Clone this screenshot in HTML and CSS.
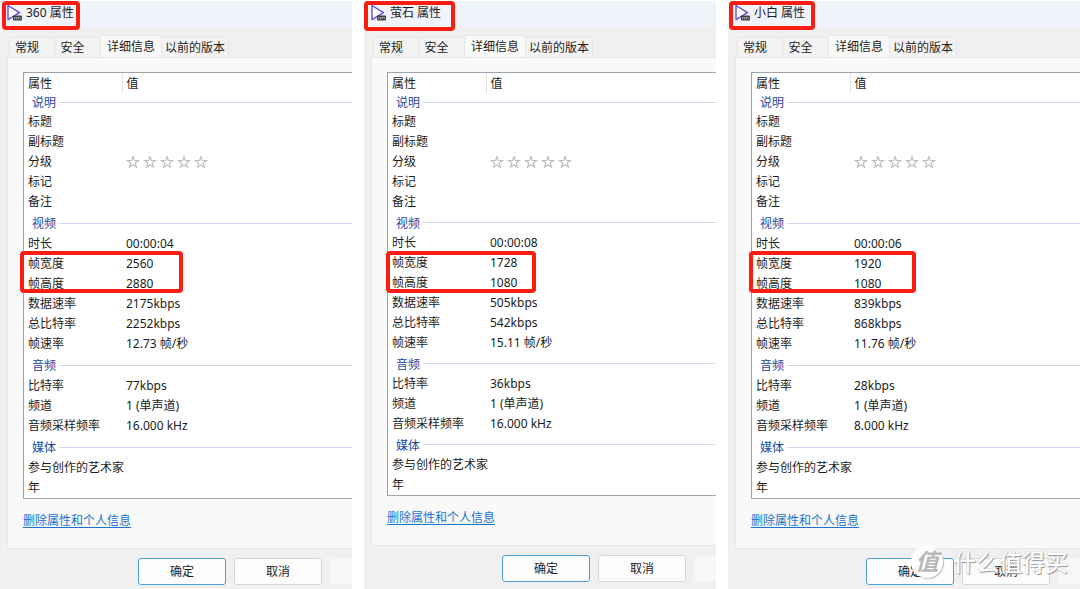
FILE: index.html
```html
<!DOCTYPE html>
<html lang="zh-CN">
<head>
<meta charset="utf-8">
<meta name="viewport" content="width=device-width, initial-scale=1">
<title>属性</title>
<link rel="stylesheet" href="styles.css">
</head>
<body>
<svg class="defs" aria-hidden="true">
  <symbol id="media" viewBox="0 0 18 18">
    <path d="M2 1.5 L13.5 8.6 L2 15.6 Z" fill="#fff" stroke="#6a4fd0" stroke-width="1.4" stroke-linejoin="round"/>
    <rect x="7" y="11.5" width="9" height="5" rx="1" fill="#3a3a3c"/>
    <path d="M8.5 15.5v-2.5l1 1.2 1-1.2v2.5M12 15.5v-2.4h1.2v1.2H12M14.6 13v2.5" fill="none" stroke="#c8c8c8" stroke-width=".6"/>
  </symbol>
  <symbol id="stars" viewBox="0 0 84 14">
    <g fill="#fff" stroke="#bdbdbd" stroke-width="1.1">
      <path id="star" d="M7 1.5 L8.4 5.5 L12.6 5.5 L9.2 8 L10.5 12.2 L7 9.7 L3.5 12.2 L4.8 8 L1.4 5.5 L5.6 5.5 Z"/>
      <use href="#star" x="17"/><use href="#star" x="34"/><use href="#star" x="51"/><use href="#star" x="68"/>
    </g>
  </symbol>
</svg>
<main class="board">
  <section class="dialog dialog-360">
    <header class="title"><svg class="title-icon"><use href="#media"/></svg><h1>360 属性</h1></header>
    <nav class="tabs"><button>常规</button><button>安全</button><button class="active">详细信息</button><button class="wide">以前的版本</button></nav>
    <div class="page">
      <div class="list">
        <table>
          <thead><tr><th>属性</th><th>值</th></tr></thead>
          <tbody>
            <tr class="group first"><th colspan="2"><div>说明</div></th></tr>
            <tr><td>标题</td><td></td></tr>
            <tr><td>副标题</td><td></td></tr>
            <tr><td>分级</td><td><svg class="stars"><use href="#stars"/></svg></td></tr>
            <tr><td>标记</td><td></td></tr>
            <tr><td>备注</td><td></td></tr>
            <tr class="group"><th colspan="2"><div>视频</div></th></tr>
            <tr><td>时长</td><td>00:00:04</td></tr>
            <tr><td>帧宽度</td><td>2560</td></tr>
            <tr><td>帧高度</td><td>2880</td></tr>
            <tr><td>数据速率</td><td>2175kbps</td></tr>
            <tr><td>总比特率</td><td>2252kbps</td></tr>
            <tr><td>帧速率</td><td>12.73 帧/秒</td></tr>
            <tr class="group"><th colspan="2"><div>音频</div></th></tr>
            <tr><td>比特率</td><td>77kbps</td></tr>
            <tr><td>频道</td><td>1 (单声道)</td></tr>
            <tr><td>音频采样频率</td><td>16.000 kHz</td></tr>
            <tr class="group"><th colspan="2"><div>媒体</div></th></tr>
            <tr><td>参与创作的艺术家</td><td></td></tr>
            <tr><td>年</td><td></td></tr>
          </tbody>
        </table>
      </div>
      <a class="remove" href="#">删除属性和个人信息</a>
    </div>
    <footer class="actions"><button class="primary">确定</button><button>取消</button><button disabled aria-label="应用"></button></footer>
    <span class="mark mark-title"></span><span class="mark mark-size"></span>
  </section>

  <section class="dialog dialog-ys compact">
    <header class="title"><svg class="title-icon"><use href="#media"/></svg><h1>萤石 属性</h1></header>
    <nav class="tabs"><button>常规</button><button>安全</button><button class="active">详细信息</button><button class="wide">以前的版本</button></nav>
    <div class="page">
      <div class="list">
        <table>
          <thead><tr><th>属性</th><th>值</th></tr></thead>
          <tbody>
            <tr class="group first"><th colspan="2"><div>说明</div></th></tr>
            <tr><td>标题</td><td></td></tr>
            <tr><td>副标题</td><td></td></tr>
            <tr><td>分级</td><td><svg class="stars"><use href="#stars"/></svg></td></tr>
            <tr><td>标记</td><td></td></tr>
            <tr><td>备注</td><td></td></tr>
            <tr class="group"><th colspan="2"><div>视频</div></th></tr>
            <tr><td>时长</td><td>00:00:08</td></tr>
            <tr><td>帧宽度</td><td>1728</td></tr>
            <tr><td>帧高度</td><td>1080</td></tr>
            <tr><td>数据速率</td><td>505kbps</td></tr>
            <tr><td>总比特率</td><td>542kbps</td></tr>
            <tr><td>帧速率</td><td>15.11 帧/秒</td></tr>
            <tr class="group"><th colspan="2"><div>音频</div></th></tr>
            <tr><td>比特率</td><td>36kbps</td></tr>
            <tr><td>频道</td><td>1 (单声道)</td></tr>
            <tr><td>音频采样频率</td><td>16.000 kHz</td></tr>
            <tr class="group"><th colspan="2"><div>媒体</div></th></tr>
            <tr><td>参与创作的艺术家</td><td></td></tr>
            <tr><td>年</td><td></td></tr>
          </tbody>
        </table>
      </div>
      <a class="remove" href="#">删除属性和个人信息</a>
    </div>
    <footer class="actions"><button class="primary">确定</button><button>取消</button><button disabled aria-label="应用"></button></footer>
    <span class="mark mark-title"></span><span class="mark mark-size"></span>
  </section>

  <section class="dialog dialog-xb">
    <header class="title"><svg class="title-icon"><use href="#media"/></svg><h1>小白 属性</h1></header>
    <nav class="tabs"><button>常规</button><button>安全</button><button class="active">详细信息</button><button class="wide">以前的版本</button></nav>
    <div class="page">
      <div class="list">
        <table>
          <thead><tr><th>属性</th><th>值</th></tr></thead>
          <tbody>
            <tr class="group first"><th colspan="2"><div>说明</div></th></tr>
            <tr><td>标题</td><td></td></tr>
            <tr><td>副标题</td><td></td></tr>
            <tr><td>分级</td><td><svg class="stars"><use href="#stars"/></svg></td></tr>
            <tr><td>标记</td><td></td></tr>
            <tr><td>备注</td><td></td></tr>
            <tr class="group"><th colspan="2"><div>视频</div></th></tr>
            <tr><td>时长</td><td>00:00:06</td></tr>
            <tr><td>帧宽度</td><td>1920</td></tr>
            <tr><td>帧高度</td><td>1080</td></tr>
            <tr><td>数据速率</td><td>839kbps</td></tr>
            <tr><td>总比特率</td><td>868kbps</td></tr>
            <tr><td>帧速率</td><td>11.76 帧/秒</td></tr>
            <tr class="group"><th colspan="2"><div>音频</div></th></tr>
            <tr><td>比特率</td><td>28kbps</td></tr>
            <tr><td>频道</td><td>1 (单声道)</td></tr>
            <tr><td>音频采样频率</td><td>8.000 kHz</td></tr>
            <tr class="group"><th colspan="2"><div>媒体</div></th></tr>
            <tr><td>参与创作的艺术家</td><td></td></tr>
            <tr><td>年</td><td></td></tr>
          </tbody>
        </table>
      </div>
      <a class="remove" href="#">删除属性和个人信息</a>
    </div>
    <footer class="actions"><button class="primary">确定</button><button>取消</button><button disabled aria-label="应用"></button></footer>
    <span class="mark mark-title"></span><span class="mark mark-size"></span>
    <div class="watermark"><span class="badge">值</span><span>什么值得买</span></div>
  </section>
</main>
</body>
</html>
```
FILE: styles.css
```css
* { box-sizing: border-box; }

body {
  margin: 0;
  background: #fff;
  color: #1c1c1c;
  font: 12px/20px "Noto Sans", "Noto Sans CJK SC", sans-serif;
}

button { font: inherit; color: inherit; padding: 0; }

.defs { position: absolute; width: 0; height: 0; }

.board {
  display: grid;
  grid-template-columns: repeat(3, minmax(0, 1fr));
  gap: 12px;
  min-height: 100vh;
}

.dialog {
  --group: 22px;
  position: relative;
  overflow: hidden;
  padding-top: 1px;
  background: #f0f0f0;
  background-clip: content-box;
}
.compact { --group: 21px; }

.title {
  display: flex;
  align-items: center;
  gap: 2px;
  height: 26px;
  padding: 0 0 2px 6px;
  background: #f1f3fa;
}
.title-icon { width: 18px; height: 18px; }
.title h1 { margin: 0; font-size: 12px; font-weight: 400; }

.tabs {
  display: flex;
  align-items: flex-end;
  height: 30px;
  padding-left: 9px;
}
.tabs button {
  width: 46px;
  height: 20px;
  padding-right: 10px;
  border: 1px solid #e6e6e6;
  border-width: 1px 1px 0 0;
  background: #f3f3f3;
  line-height: 20px;
  white-space: nowrap;
}
.tabs button:first-child { border-left-width: 1px; }
.tabs .active {
  width: 61px;
  height: 22px;
  padding: 0;
  background: #f9f9f9;
}
.tabs .wide { width: 67px; padding: 0; }

.page {
  margin-left: 7px;
  padding: 14px 0 17px 15px;
  border: 1px solid #e8e8e8;
  border-right: 0;
  background: #f9f9f9;
}

.list {
  border: 1px solid #a0a3aa;
  border-right: 0;
  background: #fff;
}

table { width: 100%; border-collapse: collapse; table-layout: fixed; }
th, td { height: 20px; padding: 0 0 0 4px; font-weight: 400; text-align: left; line-height: 18px; }
thead th { height: 21px; }
thead th:first-child { width: 98px; border-right: 1px solid #e5e5e5; }
td { white-space: nowrap; }

.group th { height: var(--group); padding: 2px 0 0 8px; color: #1f479f; }
.group.first th { height: 18px; padding-top: 0; }
.group div { display: flex; align-items: center; gap: 3px; }
.group div::after { content: ""; flex: 1; height: 1px; margin-bottom: 2px; background: #cfdaee; }

.stars { display: block; width: 84px; height: 14px; }

.remove {
  display: block;
  width: max-content;
  margin-top: 12px;
  color: #1a73cc;
  text-underline-offset: 2px;
}

.actions { display: flex; gap: 8px; padding: 9px 0 4px 138px; }
.actions button {
  flex: none;
  width: 88px;
  height: 27px;
  border: 1px solid #d6d6d6;
  border-radius: 3px;
  background: #fdfdfd;
}
.actions .primary { border-color: #4ba0dc; }
.actions button:disabled { border-color: #f4f4f4; background: #f7f7f7; }

/* Highlight frames drawn over the dialogs */
.mark {
  position: absolute;
  border: 4px solid #fb1d12;
  border-radius: 4px;
  pointer-events: none;
}
.mark-title { left: 1px; top: 1px; width: 86px; height: 29px; }
.mark-size { left: 21px; top: 251px; width: 167px; height: 42px; }
.dialog-360 .mark-title { left: 2px; width: 78px; }
.dialog-360 .mark-size { left: 20px; width: 163px; }
.dialog-ys .mark-title { left: 0; width: 91px; height: 30px; }
.dialog-ys .mark-size { left: 22px; width: 150px; }

.watermark {
  position: absolute;
  right: 12px;
  bottom: 11px;
  display: flex;
  align-items: center;
  gap: 10px;
  color: #fff;
  font-size: 23px;
  font-weight: 500;
  line-height: 32px;
  text-shadow: 1px 1px 1px #999, 0 0 1px #aaa;
}
.badge {
  width: 32px;
  height: 32px;
  border-radius: 50%;
  background: #fffffff0;
  box-shadow: 1px 1px 1px #bbb;
  color: #b8b8b8;
  font-style: italic;
  font-weight: 700;
  line-height: 30px;
  text-align: center;
  text-shadow: none;
}
```
